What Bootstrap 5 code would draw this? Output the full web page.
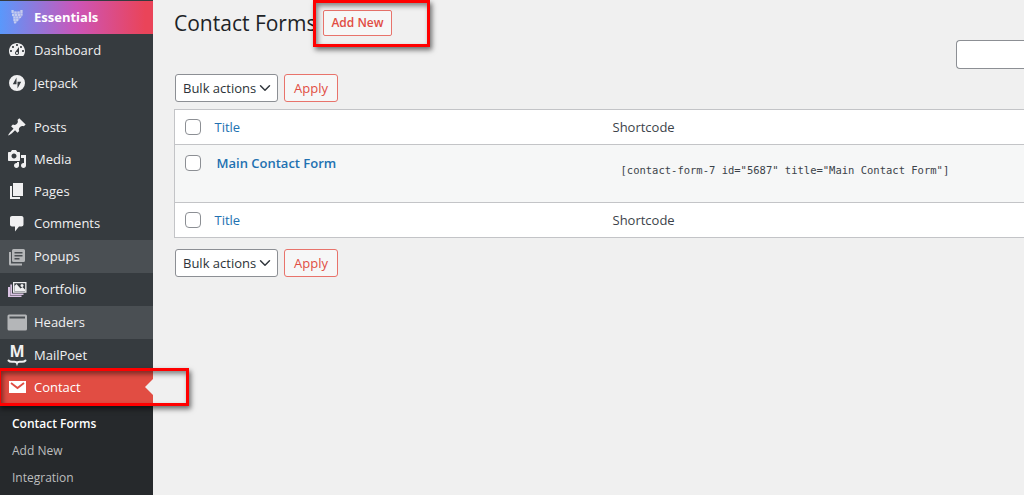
<!DOCTYPE html>
<html lang="en">
<head>
<meta charset="utf-8">
<meta name="viewport" content="width=device-width, initial-scale=1">
<title>Contact Forms</title>
<link href="https://cdn.jsdelivr.net/npm/bootstrap@5.3.0/dist/css/bootstrap.min.css" rel="stylesheet">
<style>
body{font-family:"Open Sans","Noto Sans",sans-serif;font-size:13px;line-height:20px;color:#3c434a;background:#f0f0f0}
a{text-decoration:none;color:#2271b1}
.sidebar{width:153px;background:#363b3f;padding-top:1px}
.menu-row{height:33px;padding-left:7px;padding-bottom:1px;gap:7px;color:#f0f0f1;font-size:13px}
.menu-row svg{width:20px;height:20px;flex:none;fill:#f0f0f1;overflow:visible}
.menu-row.short{height:32px}
.menu-row.essentials{background:linear-gradient(90deg,#5a98fb,#cc55b8 50%,#ea4459 95%);color:#fff;font-weight:700}
.menu-row.raised{background:#4a4f53}
.menu-row.raised svg{fill:#b4b6b8}
.menu-row.current{background:#e14d43;color:#fff}
.menu-row.current svg{fill:#fff}
.menu-row.current::after{content:"";position:absolute;right:0;top:8px;border:8px solid transparent;border-left:0;border-right-color:#f0f0f0}
.section-gap{margin-top:11px}
.submenu{background:#26292c;padding:6px 0 0 12px}
.submenu a{height:27px;color:#bcbdbe;font-size:12px}
.submenu a.active{color:#fff;font-weight:600}
.marker{position:absolute;border:3px solid #f00;box-shadow:2px 3px 5px rgba(0,0,0,.55),inset 2px 3px 5px rgba(0,0,0,.45);pointer-events:none}
.marker-add{inset:-9px -38px -11px -10px}
.marker-menu{inset:-3px -36px -2px -2px;z-index:2}
.content-area{padding-left:21px}
.page-title{font-size:21px;line-height:28px;color:#1d2327;font-weight:400}
.title-bar{padding-top:9px;height:40px;gap:7px}
.btn-wp{--bs-btn-color:#e14d43;--bs-btn-border-color:#e8736b;--bs-btn-bg:#f6f7f7;--bs-btn-hover-color:#c3372d;--bs-btn-hover-border-color:#c3372d;--bs-btn-border-radius:3px;--bs-btn-font-size:13px;--bs-btn-line-height:20px;--bs-btn-padding-y:3px;--bs-btn-padding-x:9px}
.btn-title{--bs-btn-font-size:12px;--bs-btn-padding-x:7px;--bs-btn-padding-y:2px;--bs-btn-border-radius:2px;--bs-btn-font-weight:600;margin-top:1px}
.search-box{width:68px;height:29px;border:1px solid #8c8f94;border-right:0;border-radius:4px 0 0 4px;background:#fff}
.bulk-row{gap:6px;padding-left:1px}
.bulk-row .btn{height:28px}
.bulk-top{padding-top:5px}
.bulk-select{width:103px;height:28px;padding:0 20px 0 7px;border:1px solid #8c8f94;border-radius:3px;font-size:13px;line-height:20px;color:#2c3338;background-color:#fff;background-position:right 6px center;background-size:12px 12px}
.forms-table{border:1px solid #c3c4c7;border-right:0;color:#3c434a;table-layout:fixed;background:#fff;margin:7px 0 11px}
.forms-table th,.forms-table td{padding:0 10px;font-weight:400;background:#fff;color:inherit;border-color:#c3c4c7;vertical-align:middle;height:35px}
.forms-table tbody td{background:#f6f7f7;height:58px;vertical-align:top;padding-top:8px}
.forms-table tbody td.code-cell{padding:15px 18px 0;font-size:12px}
.col-check{width:30px}
.col-title{width:398px}
.forms-table .form-check-input{display:block;width:16px;height:16px;margin:0;border:1px solid #8c8f94;border-radius:4px}
.forms-table tbody .form-check-input{margin-top:2px}
.forms-table code{color:#3c434a;font-family:"DejaVu Sans Mono",monospace}
.forms-table .row-title{font-weight:600;padding-left:2px}
</style>
<script src="https://cdn.jsdelivr.net/npm/bootstrap@5.3.0/dist/js/bootstrap.bundle.min.js"></script>
</head>
<body>
<div class="d-flex vh-100 overflow-hidden">
<nav class="sidebar flex-shrink-0 d-flex flex-column" aria-label="Admin menu">
  <a href="#" class="menu-row essentials d-flex align-items-center"><svg viewBox="0 0 20 20" opacity=".65"><path d="M4.500 3h2v3h-2zM7.500 4.500h2v2h-2zM10.500 4.500h2v2h-2zM13.500 3h2v3h-2zM5 7h2.200v2H5zM8 7h2v2H8zM11 7h2v2h-2zM13.500 6.500h2v2h-2zM6.500 9.500h2v2h-2zM9.200 9.500h2v2h-2zM12 9.500h2v1.500h-2zM6.500 12h2v2h-2zM9.200 12h2v2h-2zM7 14.500h2v1.800H7z"/><path opacity=".5" d="M4.500 3h2l1 1.500h5l1-1.500h2v6L11 14l-2 2.500H7L6 11z"/></svg>Essentials</a>
  <a href="#" class="menu-row d-flex align-items-center"><svg viewBox="0 0 20 20"><path d="M3.760 16h12.480c1.100-1.370 1.760-3.110 1.760-5 0-4.420-3.580-8-8-8s-8 3.580-8 8c0 1.890.66 3.630 1.760 5zM10 4c.55 0 1 .45 1 1s-.45 1-1 1-1-.45-1-1 .45-1 1-1zM6 6c.55 0 1 .45 1 1s-.45 1-1 1-1-.45-1-1 .45-1 1-1zm8 0c.55 0 1 .45 1 1s-.45 1-1 1-1-.45-1-1 .45-1 1-1zm-5.370 5.550L12 7v6c0 1.100-.9 2-2 2s-2-.9-2-2c0-.57.24-1.080.63-1.450zM4 10c.55 0 1 .45 1 1s-.45 1-1 1-1-.45-1-1 .45-1 1-1zm12 0c.55 0 1 .45 1 1s-.45 1-1 1-1-.45-1-1 .45-1 1-1zm-5 3c0-.55-.45-1-1-1s-1 .45-1 1 .45 1 1 1 1-.45 1-1z"/></svg>Dashboard</a>
  <a href="#" class="menu-row d-flex align-items-center"><svg viewBox="0 0 20 20"><path fill-rule="evenodd" d="M10 2a8 8 0 1 0 0 16 8 8 0 0 0 0-16zM9.500 4.500v6.700H5.800zM10.500 15.500V8.800h3.700z"/></svg>Jetpack</a>
  <a href="#" class="menu-row short section-gap d-flex align-items-center"><svg viewBox="0 0 20 20"><path d="M10.440 3.020l1.820-1.820 6.360 6.350-1.830 1.820c-1.050-.68-2.480-.57-3.410.36l-.75.75c-.92.93-1.040 2.350-.35 3.410l-1.830 1.820-2.410-2.410-2.800 2.790c-.42.42-3.380 2.710-3.800 2.290s1.860-3.390 2.280-3.810l2.790-2.790L4.100 9.360l1.830-1.820c1.050.69 2.480.57 3.400-.36l.75-.75c.93-.92 1.050-2.350.36-3.410z"/></svg>Posts</a>
  <a href="#" class="menu-row short d-flex align-items-center"><svg viewBox="0 0 20 20"><path fill-rule="evenodd" d="M13 11V4c0-.55-.45-1-1-1h-1.670L9 1H5L3.670 3H2c-.55 0-1 .45-1 1v7c0 .55.45 1 1 1h10c.55 0 1-.45 1-1zM7 4.500c1.380 0 2.500 1.120 2.500 2.500S8.380 9.500 7 9.500 4.500 8.380 4.500 7 5.620 4.500 7 4.500zM14 6h5v10.500c0 1.380-1.120 2.500-2.500 2.500S14 17.880 14 16.500s1.120-2.500 2.500-2.500c.17 0 .34.02.5.05V9h-3V6zm-4 8.050V13h2v3.500c0 1.380-1.120 2.500-2.500 2.500S7 17.880 7 16.500 8.120 14 9.500 14c.17 0 .34.02.5.05z"/></svg>Media</a>
  <a href="#" class="menu-row short d-flex align-items-center"><svg viewBox="0 0 20 20"><path d="M6 15V2h10v13H6zm-1 1h8v2H3V5h2v11z"/></svg>Pages</a>
  <a href="#" class="menu-row d-flex align-items-center"><svg viewBox="0 0 20 20"><path d="M5 3h9.500c1.100 0 2 .9 2 2v6.500c0 1.100-.9 2-2 2H12L8 18.500v-5H5c-1.100 0-2-.9-2-2V5c0-1.100.9-2 2-2z"/></svg>Comments</a>
  <a href="#" class="menu-row raised d-flex align-items-center"><svg viewBox="0 0 20 20"><path d="M2 6h2v11.500h11v2H3.500A1.500 1.500 0 0 1 2 18z"/><path fill-rule="evenodd" d="M6.500 3h10A1.500 1.500 0 0 1 18 4.500v10a1.500 1.500 0 0 1-1.500 1.500h-10A1.500 1.500 0 0 1 5 14.500v-10A1.500 1.500 0 0 1 6.500 3zM7.500 6v1.500h8V6zM7.500 9v1.500h8V9zM7.500 12v1.500h5V12z"/></svg>Popups</a>
  <a href="#" class="menu-row d-flex align-items-center"><svg viewBox="0 0 20 20"><path fill="#d9c2e2" d="M1 8h2v8.500h11.500V18H1zM3.300 5.500H5v9h11.500V16H3.300z"/><path fill-rule="evenodd" d="M6 3h13.500v10.800H6zM7.300 4.300v8.200h10.900V4.300z"/><path d="M7.500 12.300V7l2-2 4 4.500 2-1.500 2.500 2.500v1.800z"/><circle cx="15" cy="6.500" r="1.500"/></svg>Portfolio</a>
  <a href="#" class="menu-row raised d-flex align-items-center"><svg viewBox="0 0 20 20"><path fill-rule="evenodd" d="M2 2.500h16.500A1.500 1.500 0 0 1 20 4v13a1.500 1.500 0 0 1-1.500 1.500H2A1.500 1.500 0 0 1 .5 17V4A1.500 1.500 0 0 1 2 2.500zM2.500 4.500v2H18v-2z"/></svg>Headers</a>
  <a href="#" class="menu-row short d-flex align-items-center"><svg viewBox="0 0 20 20"><text x="10" y="12" text-anchor="middle" font-family="Open Sans, sans-serif" font-weight="700" font-size="16" aria-hidden="true">M</text><path fill="none" stroke="#f0f0f1" stroke-width="2" stroke-linecap="round" d="M1.500 15.500q1 1.200 3.500 1.200h2.500q2 0 2.500 1.500.5-1.500 2.500-1.500H15q2.500 0 3.500-1.200"/></svg>MailPoet</a>
  <div class="position-relative">
    <a href="#" class="menu-row current position-relative d-flex align-items-center" aria-current="true"><svg viewBox="0 0 20 20"><path d="M2 4h17v12H2z"/><path fill="none" stroke="#e14d43" stroke-width="1.800" d="M4 6l6.500 5L17 6"/></svg>Contact</a>
    <span class="marker marker-menu"></span>
  </div>
  <div class="submenu flex-grow-1">
    <a href="#" class="active d-flex align-items-center">Contact Forms</a>
    <a href="#" class="d-flex align-items-center">Add New</a>
    <a href="#" class="d-flex align-items-center">Integration</a>
  </div>
</nav>
<main class="content-area flex-grow-1">
  <div class="title-bar d-flex align-items-start">
    <h1 class="page-title m-0">Contact Forms</h1>
    <div class="position-relative"><button type="button" class="btn btn-wp btn-title d-block">Add New</button><span class="marker marker-add"></span></div>
  </div>
  <div class="d-flex justify-content-end"><input type="search" class="search-box" aria-label="Search contact forms"></div>
  <div class="bulk-row bulk-top d-flex">
    <select class="form-select bulk-select" aria-label="Select bulk action"><option>Bulk actions</option><option>Delete</option></select>
    <button type="button" class="btn btn-wp">Apply</button>
  </div>
  <table class="table forms-table">
    <thead><tr><th class="col-check"><input type="checkbox" class="form-check-input" aria-label="Select all"></th><th class="col-title"><a href="#">Title</a></th><th>Shortcode</th></tr></thead>
    <tbody><tr><td><input type="checkbox" class="form-check-input" aria-label="Select Main Contact Form"></td><td><a href="#" class="row-title">Main Contact Form</a></td><td class="code-cell"><code>[contact-form-7 id="5687" title="Main Contact Form"]</code></td></tr></tbody>
    <tfoot><tr><th><input type="checkbox" class="form-check-input" aria-label="Select all"></th><th><a href="#">Title</a></th><th>Shortcode</th></tr></tfoot>
  </table>
  <div class="bulk-row d-flex">
    <select class="form-select bulk-select" aria-label="Select bulk action"><option>Bulk actions</option><option>Delete</option></select>
    <button type="button" class="btn btn-wp">Apply</button>
  </div>
</main>
</div>
</body>
</html>
